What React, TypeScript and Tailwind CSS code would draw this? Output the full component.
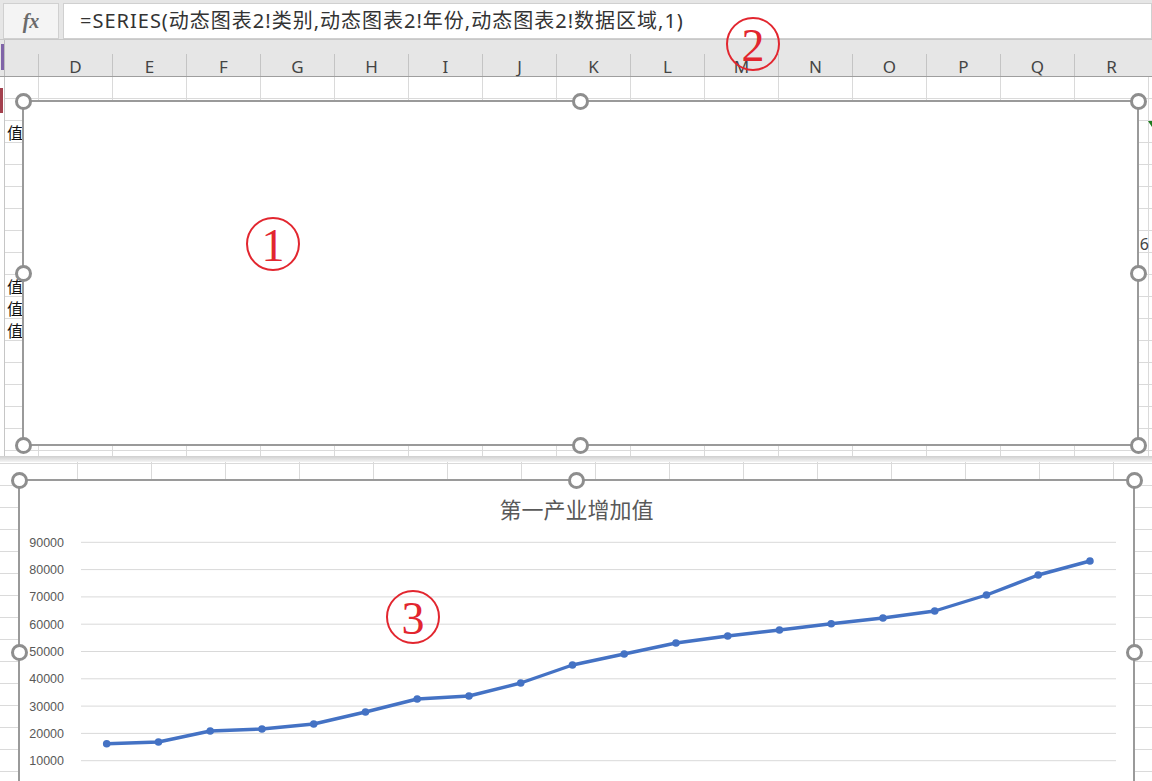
import React from "react";

const COLS = ["D", "E", "F", "G", "H", "I", "J", "K", "L", "M", "N", "O", "P", "Q", "R"];
const YS = [743.7, 742, 731, 729, 724, 712, 699, 696, 683, 665, 654, 643, 636, 630, 623.7, 618, 611, 595, 575, 561];
const LABELS = ["90000", "80000", "70000", "60000", "50000", "40000", "30000", "20000", "10000"];
const ZHI_ROWS = [2, 9, 10, 11];
const CJK = '"Noto Sans CJK SC", sans-serif';
const SERIF = '"Liberation Serif", "DejaVu Serif", serif';

function Handle() {
  return <div className="w-[17px] h-[17px] shrink-0 rounded-full border-[3px] border-[#8e8e8e] bg-white" />;
}

/* selection frame of a chart object: 8 handles laid out by flex */
function Handles() {
  return (
    <div className="absolute -inset-[9.5px] flex flex-col justify-between pointer-events-none">
      <div className="flex justify-between">
        <Handle />
        <Handle />
        <Handle />
      </div>
      <div className="flex justify-between">
        <Handle />
        <Handle />
      </div>
      <div className="flex justify-between">
        <Handle />
        <Handle />
        <Handle />
      </div>
    </div>
  );
}

function Circled({ n, className }: { n: string; className: string }) {
  return (
    <div
      className={`absolute w-[54px] h-[54px] rounded-full border-2 border-[#e2262f] flex items-center justify-center text-[#e2262f] text-[46px] leading-none ${className}`}
      style={{ fontFamily: SERIF }}
    >
      <span className="mt-[3px]">{n}</span>
    </div>
  );
}

export default function App() {
  const pts = YS.map((y, i) => [106.7 + 51.75 * i, y]);
  const path = pts.map((p, i) => `${i === 0 ? "M" : "L"}${p[0].toFixed(1)} ${p[1]}`).join(" ");
  return (
    <div
      className="relative w-[1152px] h-[781px] overflow-hidden bg-white"
      style={{ fontFamily: '"Noto Sans", "Noto Sans CJK SC", sans-serif' }}
    >
      {/* formula bar */}
      <div className="flex h-[40px] bg-[#e6e6e6] pt-[3px] pl-[3px] border-b border-[#c8c8c8]">
        <div className="w-[56px] h-[36px] bg-[#f4f4f4] border border-[#d0d0d0] flex items-center justify-center">
          <span className="italic font-semibold text-[20px] text-[#6a6a6a]" style={{ fontFamily: SERIF }}>
            fx
          </span>
        </div>
        <div className="ml-[4px] flex-1 h-[36px] bg-white border border-[#d0d0d0] flex items-center pl-[16px] text-[20px] tracking-[1px] text-[#333]">
          =SERIES(动态图表2!类别,动态图表2!年份,动态图表2!数据区域,1)
        </div>
      </div>

      {/* column header */}
      <div className="h-[37px] bg-[#e6e6e6] flex items-end border-b border-[#9e9e9e]">
        <div className="w-[4px] h-full pt-[4px] pl-[1px]">
          <div className="w-[3px] h-[26px] bg-[#8064a8]" />
        </div>
        <div className="w-[34px] h-full border-l border-[#bdbdbd]" />
        {COLS.map((c) => (
          <div
            key={c}
            className="w-[74px] shrink-0 h-[22px] pt-[4px] border-l border-[#c4c4c4] flex items-center justify-center text-[17px] text-[#444]"
          >
            {c}
          </div>
        ))}
      </div>

      {/* upper pane */}
      <div className="relative flex h-[379px]">
        <div className="w-[4px] pt-[11px]">
          <div className="w-[3px] h-[25px] bg-[#a3404d]" />
        </div>
        <div className="flex-1 flex flex-col border-l border-[#c6c6c6] bg-[image:linear-gradient(to_right,#dadada_1px,transparent_1px),linear-gradient(to_bottom,#dadada_1px,transparent_1px)] bg-[size:74px_22px] bg-[position:33px_21px]">
          {Array.from({ length: 17 }).map((_, r) => (
            <div key={r} className="h-[22px] shrink-0 flex items-center justify-between pl-[2px]">
              <span className="text-[16px] leading-none text-[#111]" style={{ fontFamily: CJK }}>
                {ZHI_ROWS.includes(r) ? "值" : ""}
              </span>
              {r === 7 && <span className="text-[16px] leading-none text-[#444] pr-[3px] mt-[4px]">6</span>}
              {r === 2 && (
                <span className="self-start w-0 h-0 border-t-[6px] border-t-[#1e7a1e] border-l-[4px] border-l-transparent" />
              )}
            </div>
          ))}
        </div>

        {/* chart 1 (floating object) */}
        <div className="absolute left-[22px] top-[23px] w-[1117px] h-[346px] border-2 border-[#9a9a9a] bg-white">
          <Handles />
          <Circled n="1" className="left-[222px] top-[115px]" />
        </div>
      </div>

      {/* split shadow */}
      <div className="h-[6px] bg-gradient-to-b from-[#cfcfcf] to-[#f4f4f4]" />

      {/* lower pane */}
      <div className="relative flex h-[320px]">
        <div className="w-[4px] bg-[image:linear-gradient(to_bottom,#dadada_1px,transparent_1px)] bg-[size:4px_22px] bg-[position:0px_1px]" />
        <div className="flex-1 bg-[image:linear-gradient(to_right,#dadada_1px,transparent_1px),linear-gradient(to_bottom,#dadada_1px,transparent_1px)] bg-[size:74px_22px] bg-[position:73px_1px]" />

        {/* chart 2 (floating object) */}
        <div className="absolute left-[18px] top-[17px] w-[1117px] h-[346px] border-2 border-[#9a9a9a] bg-white">
          <div className="pt-[12px] text-center text-[22px] text-[#595959] leading-[30px]" style={{ fontFamily: CJK }}>
            第一产业增加值
          </div>
          <svg className="absolute left-0 top-0" width={1113} height={300} viewBox="20 481 1113 300">
            {LABELS.map((l, i) => {
              const y = 542.3 + 27.3 * i;
              return (
                <g key={l}>
                  <line x1={81} x2={1116} y1={y} y2={y} stroke="#d9d9d9" strokeWidth={1} />
                  <text
                    x={64}
                    y={y + 4.5}
                    textAnchor="end"
                    fontSize={12.5}
                    fill="#595959"
                    fontFamily='"Liberation Sans", Arial, sans-serif'
                  >
                    {l}
                  </text>
                </g>
              );
            })}
            <path d={path} fill="none" stroke="#4472c4" strokeWidth={3.4} strokeLinejoin="round" strokeLinecap="round" />
            {pts.map((p, i) => (
              <circle key={i} cx={p[0]} cy={p[1]} r={3.8} fill="#4472c4" />
            ))}
          </svg>
          <Handles />
          <Circled n="3" className="left-[366px] top-[109px]" />
        </div>
      </div>

      {/* annotation over the header */}
      <Circled n="2" className="left-[726px] top-[17px]" />
    </div>
  );
}
